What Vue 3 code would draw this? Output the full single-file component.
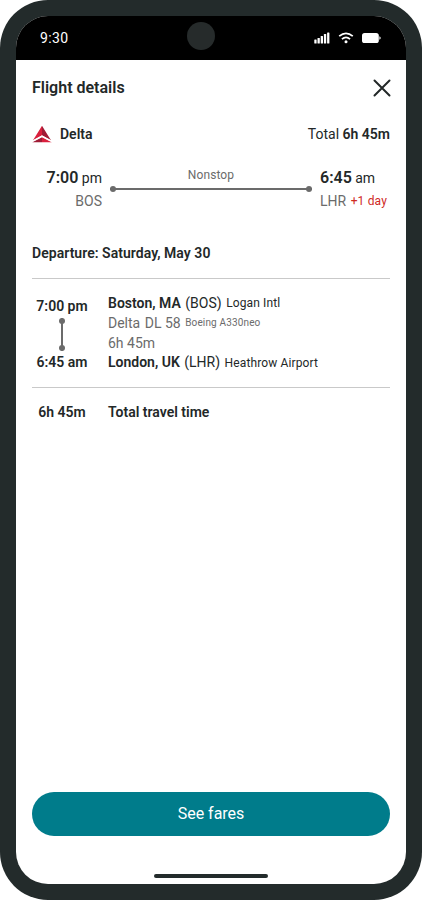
<script setup>
const bars = [4, 5.5, 7.5, 9.5, 11]
const flight = {
  airline: 'Delta',
  total: '6h 45m',
  date: 'Departure: Saturday, May 30',
}
</script>

<template>
  <main class="phone">
    <div class="screen">
      <header class="status">
        <span class="clock">9:30</span>
        <span class="camera"></span>
        <div class="status-icons">
          <svg class="signal" width="16" height="12" viewBox="0 0 16 12">
            <rect v-for="(h, i) in bars" :key="i" :x="0.3 + i * 3.2" :y="11.5 - h" width="2.3" :height="h" rx=".5" />
          </svg>
          <svg class="wifi" width="16" height="12" viewBox="0 0 16 12">
            <path d="M1.2 4.2Q8-1.6 14.8 4.2M3.9 7.1Q8 3.6 12.1 7.1" />
            <circle cx="8" cy="9.8" r="1.5" />
          </svg>
          <svg class="battery" width="19" height="12" viewBox="0 0 19 12">
            <rect x="0" y="1" width="16.8" height="10" rx="2.6" />
            <path d="M17.4 4.2q1.3.5 1.3 1.8t-1.3 1.8z" />
          </svg>
        </div>
      </header>

      <section class="title-row">
        <h1>Flight details</h1>
        <button class="close" aria-label="Close">
          <svg width="18" height="18" viewBox="0 0 18 18"><path d="M1.5 1.5l15 15M16.5 1.5l-15 15" /></svg>
        </button>
      </section>

      <section class="airline-row">
        <svg class="logo" width="20" height="18" viewBox="0 0 20 18">
          <path fill="#d9203d" d="M10 .8L4 10.5 .8 15.4 10 10.2z" />
          <path fill="#a01c36" d="M10 .8l6 9.7 3.2 4.9L10 10.2z" />
          <path fill="#a01c36" d="M.3 17.2L10 12.2v5z" />
          <path fill="#d9203d" d="M19.7 17.2L10 12.2v5z" />
          <path class="logo-cut" d="M1 15.8l9-4.6 9 4.6" />
        </svg>
        <b class="airline">{{ flight.airline }}</b>
        <span class="total">Total <b>{{ flight.total }}</b></span>
      </section>

      <section class="summary">
        <div class="from">
          <p class="time"><b>7:00</b> pm</p>
          <p class="code">BOS</p>
        </div>
        <div class="route">
          <span class="stops">Nonstop</span>
          <div class="line"></div>
        </div>
        <div class="to">
          <p class="time"><b>6:45</b> am</p>
          <p class="code">LHR <small>+1 day</small></p>
        </div>
      </section>

      <h2>{{ flight.date }}</h2>

      <section class="leg">
        <div class="leg-times">
          <b>7:00 pm</b>
          <div class="vline"></div>
          <b>6:45 am</b>
        </div>
        <div class="leg-info">
          <p><b>Boston, MA</b> <span>(BOS)</span> <small>Logan Intl</small></p>
          <p class="muted carrier"><span>Delta</span> <span>DL 58</span> <small>Boeing A330neo</small></p>
          <p class="muted">6h 45m</p>
          <p><b>London, UK</b> <span>(LHR)</span> <small>Heathrow Airport</small></p>
        </div>
      </section>

      <section class="travel">
        <b>{{ flight.total }}</b>
        <b>Total travel time</b>
      </section>

      <button class="fares">See fares</button>
      <div class="home"></div>
    </div>
  </main>
</template>

<style>
body { margin: 0; background: #fff; }
</style>

<style scoped>
.phone {
  box-sizing: border-box;
  width: 422px;
  height: 900px;
  padding: 16px;
  border-radius: 48px;
  background: #232b2b;
  font-family: Roboto, sans-serif;
  font-size: 14px;
  color: #232828;
}
.screen {
  display: flex;
  flex-direction: column;
  height: 868px;
  border-radius: 32px;
  overflow: hidden;
  background: #fff;
}
h1, h2, p { margin: 0; }
b { font-weight: 600; }
button { border: 0; padding: 0; background: none; font-family: inherit; }
svg { display: block; }

.status {
  position: relative;
  display: flex;
  align-items: center;
  justify-content: space-between;
  flex: none;
  height: 44px;
  padding: 0 25px 0 24px;
  background: #000;
  color: #fff;
}
.clock { letter-spacing: 0.4px; }
.camera {
  position: absolute;
  left: 171px;
  top: 6px;
  width: 28px;
  height: 28px;
  border-radius: 50%;
  background: #262b2b;
}
.status-icons { display: flex; gap: 8px; fill: #fff; }
.wifi path { fill: none; stroke: #fff; stroke-width: 1.7; }

.title-row {
  display: flex;
  align-items: center;
  justify-content: space-between;
  height: 56px;
  padding: 0 15px 0 16px;
}
h1 { margin-bottom: 2px; font-size: 16px; font-weight: 600; }
.close { width: 18px; height: 18px; }
.close path { stroke: #232828; stroke-width: 2; stroke-linecap: round; }

.airline-row { display: flex; align-items: center; height: 36px; padding: 0 16px; }
.logo-cut { fill: none; stroke: #fff; stroke-width: 1.3; }
.airline { margin-left: 8px; }
.total { margin-left: auto; }

.summary { display: flex; height: 60px; padding: 14px 16px 0; }
.from { width: 70px; text-align: right; }
.to { width: 70px; white-space: nowrap; }
.time { font-size: 14px; line-height: 24px; }
.time b { font-size: 16px; }
.code { display: flex; align-items: center; line-height: 22px; color: #6b6b6b; }
.from .code { justify-content: flex-end; }
.code small { margin-left: 4.5px; font-size: 12px; letter-spacing: 0.15px; color: #cf2a1f; }
.route { flex: 1; margin: 0 8px; text-align: center; }
.stops { display: block; margin-top: 2px; margin-bottom: 5.5px; line-height: 14px; font-size: 12px; letter-spacing: 0.1px; color: #6b6b6b; }
.line, .vline { display: flex; align-items: center; justify-content: space-between; background: #6b6b6b; }
.line { height: 2px; }
.line::before, .line::after, .vline::before, .vline::after {
  content: '';
  width: 6px;
  height: 6px;
  border-radius: 50%;
  background: #6b6b6b;
  flex: none;
}

h2 { margin: 15px 16px 0; padding-bottom: 13px; border-bottom: 1px solid #c9c9c9; font-size: 14px; line-height: 24px; font-weight: 600; letter-spacing: 0.04px; }

.leg { display: flex; box-sizing: border-box; height: 109px; margin: 0 16px; padding-top: 14px; border-bottom: 1px solid #c9c9c9; }
.leg-times { display: flex; flex-direction: column; align-items: center; width: 60px; padding-top: 2px; }
.leg-times b { line-height: 22px; }
.vline { flex-direction: column; width: 2px; height: 33px; margin-top: 1px; }
.leg-info { margin-left: 16px; white-space: nowrap; }
.leg-info p { display: flex; align-items: center; gap: 4.5px; height: 20px; line-height: 20px; }
.leg-info p:nth-child(4) { height: 19px; line-height: 19px; }
.leg-info small { font-size: 12px; line-height: 18px; letter-spacing: 0.12px; }
.leg-info .muted { color: #6b6b6b; }
.leg-info .carrier { line-height: 19px; }
.leg-info .carrier small { font-size: 10px; letter-spacing: 0.15px; }

.travel { display: flex; height: 48px; margin: 0 16px; line-height: 48px; }
.travel b:first-child { width: 60px; margin-right: 16px; text-align: center; }

.fares {
  flex: none;
  height: 44px;
  margin: auto 16px 38px;
  padding-bottom: 1px;
  border-radius: 22px;
  background: #007c8b;
  color: #fff;
  font-size: 16px;
}
.home { flex: none; align-self: center; width: 114px; height: 4px; margin-bottom: 6px; border-radius: 2px; background: #232b2b; }
</style>
